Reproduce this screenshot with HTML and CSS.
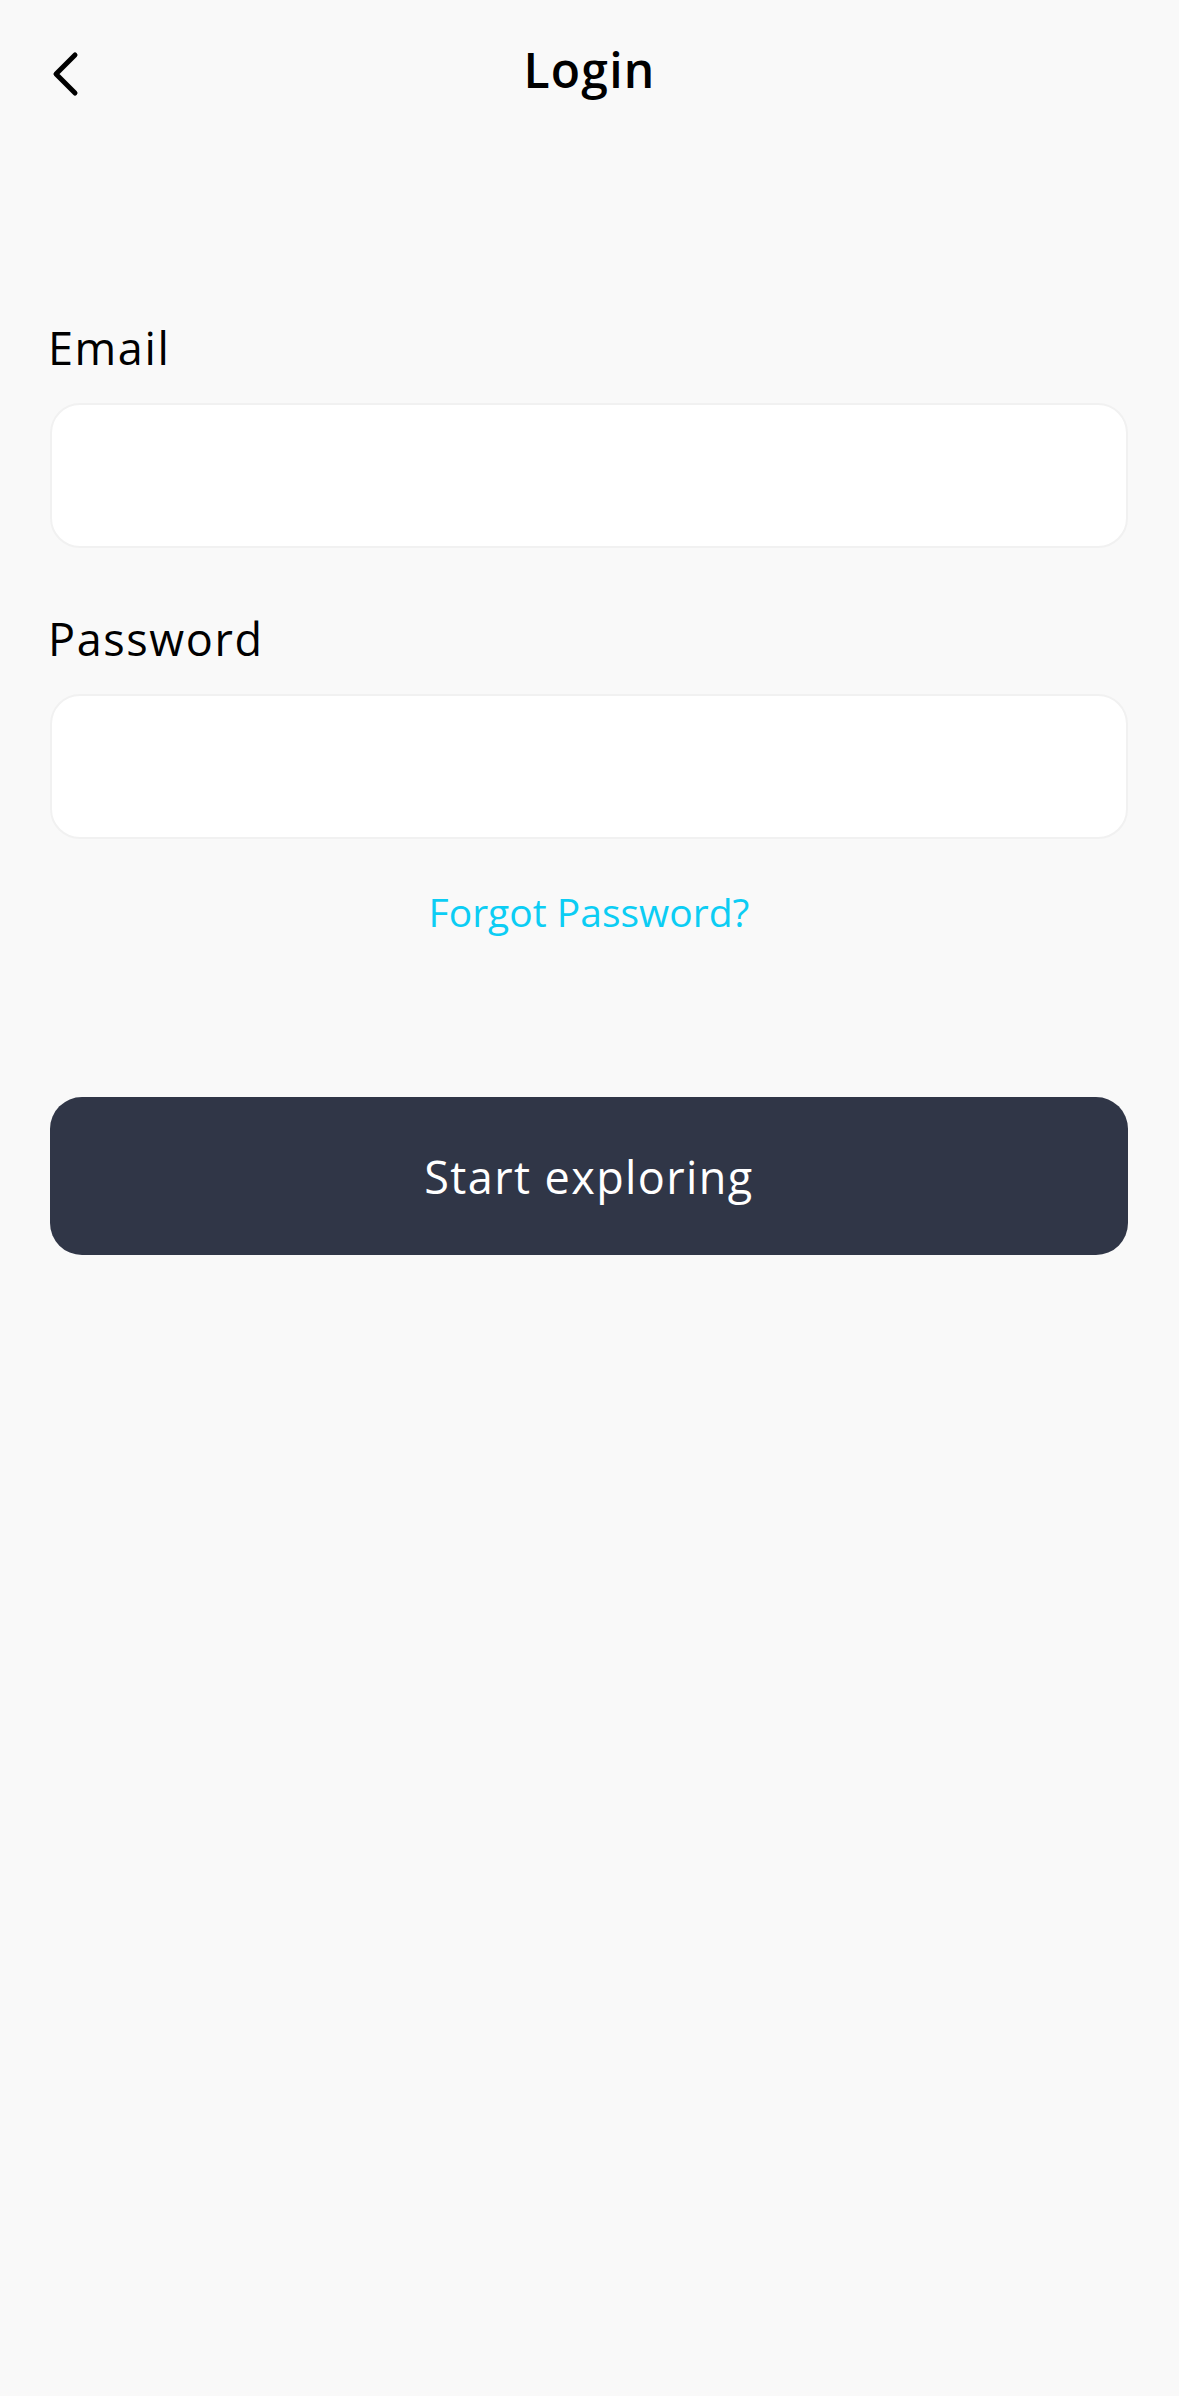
FILE: index.html
```html
<!DOCTYPE html>
<html lang="en">
<head>
<meta charset="utf-8">
<title>Login</title>
<link rel="stylesheet" href="styles.css">
</head>
<body>
<div class="screen">
  <header class="topbar">
    <button class="back" aria-label="Back">
      <svg width="30" height="48" viewBox="0 0 30 48" fill="none">
        <path d="M25 5 L6 24 L25 43" stroke="#000" stroke-width="5" stroke-linecap="round" stroke-linejoin="round"/>
      </svg>
    </button>
    <h1 class="title">Login</h1>
  </header>
  <main class="form">
    <label class="label label-email">Email</label>
    <div class="field"></div>
    <label class="label label-password">Password</label>
    <div class="field"></div>
    <a class="forgot" href="#">Forgot Password?</a>
    <button class="cta">Start exploring</button>
  </main>
</div>
</body>
</html>
```

FILE: styles.css
```css
* { box-sizing: border-box; }
html, body {
  margin: 0;
  padding: 0;
  background: #f9f9f9;
}
body {
  font-family: "Open Sans", "Liberation Sans", sans-serif;
  color: #000;
}
.screen {
  width: 1179px;
  min-height: 2396px;
  background: #f9f9f9;
}
.topbar {
  position: relative;
  height: 148px;
  display: flex;
  align-items: center;
  justify-content: center;
}
.back {
  position: absolute;
  left: 50px;
  top: 50px;
  padding: 0;
  border: 0;
  background: none;
  width: 30px;
  height: 48px;
  display: flex;
}
.title {
  margin: 0;
  font-size: 48px;
  font-weight: 600;
  line-height: 60px;
  letter-spacing: 1.2px;
  margin-top: -8px;
}
.form {
  display: flex;
  flex-direction: column;
  padding: 0 51px 0 50px;
}
.label {
  font-size: 45px;
  line-height: 60px;
  font-weight: 400;
  letter-spacing: 1.6px;
  margin-left: -2px;
}
.label-email { margin-top: 170px; }
.label-password { margin-top: 61px; }
.field {
  margin-top: 25px;
  height: 145px;
  background: #fff;
  border: 2px solid #f1f1f1;
  border-radius: 30px;
}
.forgot {
  align-self: center;
  margin-top: 47px;
  font-size: 39px;
  line-height: 52px;
  color: #0ccdf4;
  text-decoration: none;
}
.cta {
  margin-top: 159px;
  height: 158px;
  border: 0;
  border-radius: 32px;
  background: #303647;
  color: #fff;
  font-family: inherit;
  font-size: 45px;
  font-weight: 400;
  letter-spacing: 1.4px;
  display: flex;
  align-items: center;
  justify-content: center;
  padding: 0;
}
```
